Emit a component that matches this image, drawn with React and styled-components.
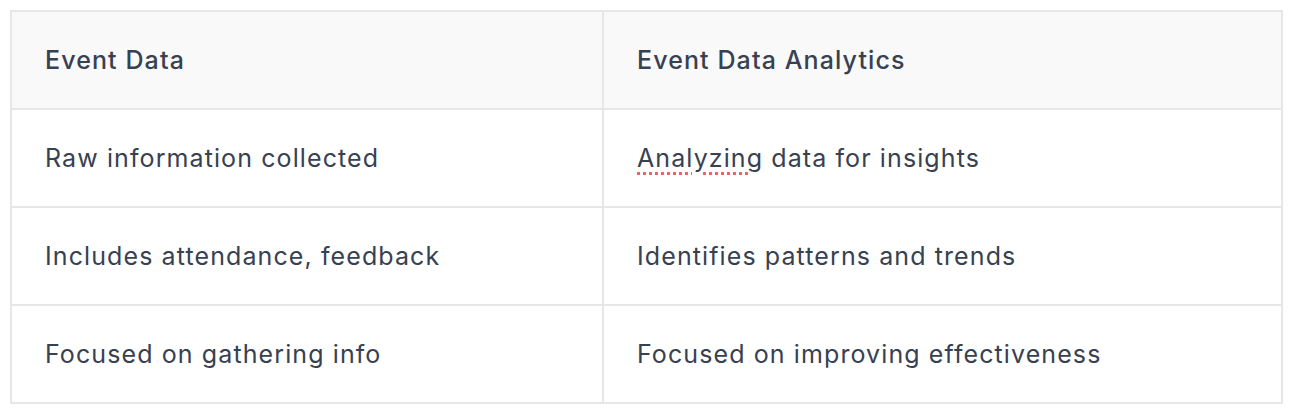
import React from "react";
import styled, { createGlobalStyle } from "styled-components";

const rows = [
  ["Raw information collected", "Analyzing data for insights"],
  ["Includes attendance, feedback", "Identifies patterns and trends"],
  ["Focused on gathering info", "Focused on improving effectiveness"],
];

export default function App() {
  return (
    <>
      <GlobalStyle />
      <Table>
        <colgroup>
          <col style={{ width: 592 }} />
          <col />
        </colgroup>
        <thead>
          <tr>
            <HeadCell>Event Data</HeadCell>
            <HeadCell>Event Data Analytics</HeadCell>
          </tr>
        </thead>
        <tbody>
          {rows.map(([a, b], i) => (
            <tr key={i}>
              <Cell>{a}</Cell>
              <Cell>
                {i === 0 ? (
                  <>
                    <Misspelled>Analyzing</Misspelled> data for insights
                  </>
                ) : (
                  b
                )}
              </Cell>
            </tr>
          ))}
        </tbody>
      </Table>
    </>
  );
}

const GlobalStyle = createGlobalStyle`
  body {
    margin: 10px;
    background: #ffffff;
    font-family: Inter, "Noto Sans", sans-serif;
    color: #374151;
  }
`;

const Table = styled.table`
  width: 1273px;
  border-collapse: collapse;
  table-layout: fixed;
  border: 2px solid #e7e7ea;
`;

const Cell = styled.td`
  border: 2px solid #e7e7ea;
  padding: 32px 32px 32px 33px;
  font-size: 25px;
  line-height: 32px;
  letter-spacing: 1.1px;
  font-weight: 400;
  color: #374151;
  text-align: left;
  white-space: nowrap;
`;

const HeadCell = styled(Cell).attrs({ as: "th" })`
  background: #f9f9f9;
  font-weight: 500;
`;

const Misspelled = styled.span`
  text-decoration: underline dotted #f0625a;
  text-decoration-thickness: 3px;
  text-underline-offset: 5px;
`;
